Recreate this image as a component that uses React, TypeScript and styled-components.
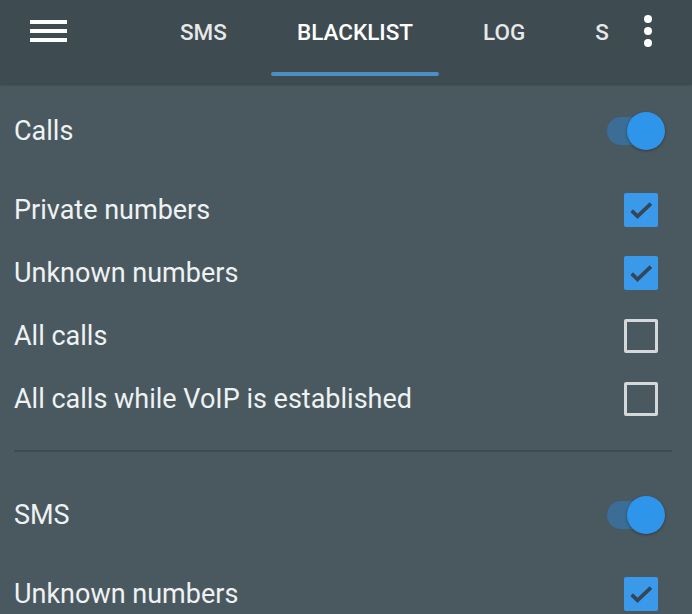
import React from "react";
import styled, { createGlobalStyle } from "styled-components";

const GlobalStyle = createGlobalStyle`
  html, body {
    margin: 0;
    padding: 0;
    background: #4a5960;
  }
  body {
    font-family: Roboto, "Noto Sans", sans-serif;
    color: #eef2f3;
    -webkit-font-smoothing: antialiased;
  }
`;

const Screen = styled.div`
  width: 692px;
  height: 614px;
  overflow: hidden;
  background: #4a5960;
`;

const Header = styled.header`
  display: flex;
  align-items: flex-start;
  height: 84px;
  background: #3e4b51;
  box-shadow: 0 1px 2px rgba(0, 0, 0, 0.25);
`;

const MenuButton = styled.button`
  display: flex;
  flex-direction: column;
  justify-content: center;
  gap: 5px;
  width: 96px;
  height: 62px;
  padding: 0 0 0 30px;
  border: 0;
  background: none;
`;

const Bar = styled.span`
  display: block;
  width: 37px;
  height: 4px;
  background: #ffffff;
`;

const TabStrip = styled.nav`
  display: flex;
  flex: 1;
  gap: 18px;
  overflow: hidden;
  padding-left: 58px;
  white-space: nowrap;
`;

const Tab = styled.div`
  display: flex;
  flex-direction: column;
  flex-shrink: 0;
`;

const TabLabel = styled.span<{ $active?: boolean }>`
  display: block;
  height: 64px;
  line-height: 64px;
  padding: 0 26px;
  font-size: 22.5px;
  font-weight: 500;
  text-align: center;
  color: ${p => (p.$active ? "#ffffff" : "rgba(255,255,255,0.88)")};
`;

const Indicator = styled.span`
  display: block;
  height: 4px;
  margin-top: 8px;
  border-radius: 2px;
  background: #4a8fc6;
`;

const Overflow = styled.button`
  display: flex;
  flex-direction: column;
  justify-content: center;
  gap: 4px;
  width: 83px;
  height: 62px;
  padding: 0 0 0 35px;
  border: 0;
  background: none;
`;

const Dot = styled.span`
  width: 8px;
  height: 8px;
  border-radius: 50%;
  background: #ffffff;
`;

const Section = styled.section<{ $top?: number }>`
  display: flex;
  flex-direction: column;
  padding-top: ${p => p.$top ?? 0}px;
`;

const Row = styled.div<{ $height: number }>`
  display: flex;
  align-items: center;
  justify-content: space-between;
  height: ${p => p.$height}px;
  padding: 0 34px 0 14px;
`;

const Label = styled.span`
  font-size: 27px;
  color: #eef2f3;
`;

const SwitchTrack = styled.span`
  position: relative;
  display: block;
  width: 54px;
  height: 28px;
  margin-right: -3px;
  border-radius: 14px;
  background: #3b6d96;
`;

const SwitchThumb = styled.span`
  position: absolute;
  right: -4px;
  top: -5px;
  width: 38px;
  height: 38px;
  border-radius: 50%;
  background: #2f95ea;
  box-shadow: 0 1px 3px rgba(0, 0, 0, 0.35);
`;

const Box = styled.span<{ $checked?: boolean }>`
  display: flex;
  align-items: center;
  justify-content: center;
  box-sizing: border-box;
  width: 34px;
  height: 34px;
  border-radius: 2px;
  background: ${p => (p.$checked ? "#3a9ae9" : "transparent")};
  border: ${p => (p.$checked ? "none" : "3px solid #d3d9db")};
`;

const Divider = styled.hr`
  margin: 20px 20px 0 14px;
  border: 0;
  height: 2px;
  background: #3e4c52;
`;

const Toggle = () => (
  <SwitchTrack>
    <SwitchThumb />
  </SwitchTrack>
);

const Check = ({ checked }: { checked?: boolean }) => (
  <Box $checked={checked}>
    {checked && (
      <svg width="28" height="28" viewBox="0 0 24 24">
        <path d="M4 12.5l5 5L20.5 6.5" fill="none" stroke="#34475a" strokeWidth="3.2" />
      </svg>
    )}
  </Box>
);

const tabs = ["SMS", "BLACKLIST", "LOG", "SETTINGS"];

export default function App() {
  return (
    <Screen>
      <GlobalStyle />
      <Header>
        <MenuButton aria-label="Menu">
          <Bar />
          <Bar />
          <Bar />
        </MenuButton>
        <TabStrip>
          {tabs.map(t => (
            <Tab key={t}>
              <TabLabel $active={t === "BLACKLIST"}>{t}</TabLabel>
              {t === "BLACKLIST" && <Indicator />}
            </Tab>
          ))}
        </TabStrip>
        <Overflow aria-label="More">
          <Dot />
          <Dot />
          <Dot />
        </Overflow>
      </Header>

      <Section>
        <Row $height={94}>
          <Label>Calls</Label>
          <Toggle />
        </Row>
        <Row $height={63}>
          <Label>Private numbers</Label>
          <Check checked />
        </Row>
        <Row $height={63}>
          <Label>Unknown numbers</Label>
          <Check checked />
        </Row>
        <Row $height={63}>
          <Label>All calls</Label>
          <Check />
        </Row>
        <Row $height={63}>
          <Label>All calls while VoIP is established</Label>
          <Check />
        </Row>
      </Section>
      <Divider />
      <Section $top={16}>
        <Row $height={94}>
          <Label>SMS</Label>
          <Toggle />
        </Row>
        <Row $height={63}>
          <Label>Unknown numbers</Label>
          <Check checked />
        </Row>
      </Section>
    </Screen>
  );
}
